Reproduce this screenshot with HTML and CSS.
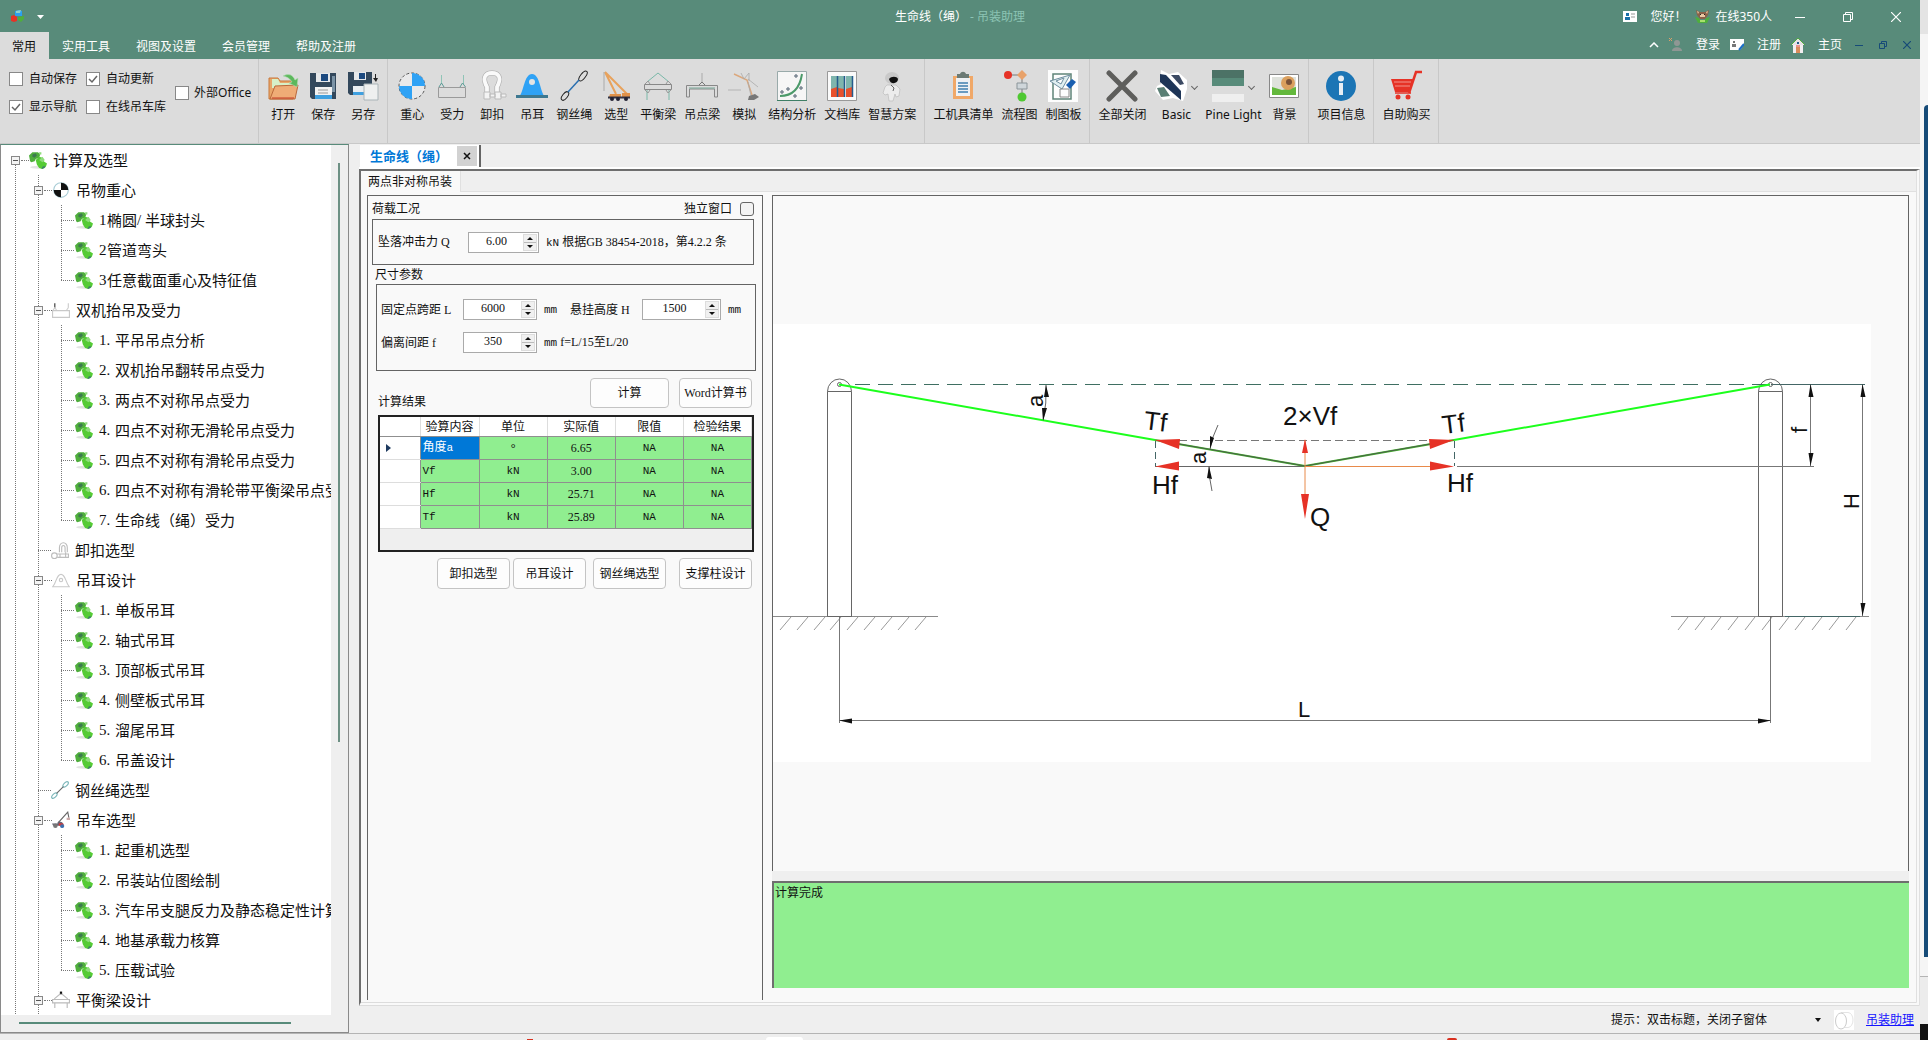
FILE: index.html
```html
<!DOCTYPE html>
<html lang="zh-CN">
<head>
<meta charset="utf-8">
<title>生命线（绳） - 吊装助理</title>
<link rel="stylesheet" href="styles.css">
</head>
<body>
<svg class="defs" aria-hidden="true">
  <symbol id="leaf" viewBox="0 0 16 16">
    <ellipse cx="8" cy="14.500" rx="7" ry="1.300" fill="#e2e4e2"/>
    <path d="M1 9L0 4 3 1h5l2 2-1 3-3 1-1 2-3 1z" fill="#4fae3c"/>
    <path d="M3 3l3-1 1 2-2 2-2-1z" fill="#3d7a50"/>
    <path d="M6 8l3-3 3 1 1 3 3 2-1 3-3 2-3-1-2-3z" fill="#55cb35"/>
    <path d="M9 1h2v2H9zM9 8l3-3 2 3-2 2z" fill="#8fdc7c"/>
    <path d="M12 14l2-1v2l-3 1z" fill="#3c7f6b"/>
  </symbol>
  <symbol id="cog" viewBox="0 0 16 16">
    <circle cx="8" cy="8" r="6.500" fill="#fff" stroke="#a9cdd6"/>
    <path d="M8 8V1.500A6.500 6.500 0 0 1 14.500 8zM8 8v6.500A6.500 6.500 0 0 1 1.500 8z" fill="#111"/>
  </symbol>
  <symbol id="lift" viewBox="0 0 16 16" fill="none">
    <path d="M.5 8.500h15v6H.5z" stroke="#c9c9c9"/><path d="M2.500 2v4" stroke="#333"/><path d="M14.500 2v4M1 8l1.500-2L4 8M13 8l1.500-2" stroke="#ccc"/>
  </symbol>
  <symbol id="shackle" viewBox="0 0 16 16" fill="none" stroke="#bdbdbd">
    <path d="M7.500 10V6a3.500 4.500 0 0 1 7 0v4M9.500 10V6a1.500 2 0 0 1 3 0v4"/><circle cx="3" cy="13" r="2.500"/><path d="M5.500 11.500h10v3h-10M8 11v4M13 10v5"/>
  </symbol>
  <symbol id="lug" viewBox="0 0 16 16" fill="none" stroke="#c9c9c9">
    <path d="M1 13.500C4 10 4 3 8 3s4 7 7 10.500M0 14h16"/><circle cx="8" cy="8" r="1.500"/>
  </symbol>
  <symbol id="rope" viewBox="0 0 16 16" fill="none" stroke="#79b5b8">
    <ellipse cx="13" cy="3" rx="1.500" ry="3" transform="rotate(45 13 3)"/><ellipse cx="3" cy="13" rx="1.500" ry="3" transform="rotate(45 3 13)"/><path d="M5 11l6-6" stroke="#666"/>
  </symbol>
  <symbol id="crane" viewBox="0 0 16 16">
    <path d="M5 11L14 1l1 5" fill="none" stroke="#666"/><path d="M0 11h5l1-2 3 1 2 3H1z" fill="#667"/><path d="M6 11h4v2H6z" fill="#d33"/><circle cx="3" cy="13" r="2" fill="#777"/><circle cx="9" cy="13.500" r="1.700" fill="#3c6fae"/><path d="M13 6h3v2h-3z" fill="#caa"/>
  </symbol>
  <symbol id="beam" viewBox="0 0 16 16" fill="none" stroke="#bbb">
    <path d="M2 7l6-5 6 5M.5 7.500h15v3H.5zM2.500 10v5M13.500 10v5"/><path d="M7 1.500h2" stroke="#111" stroke-width="2"/>
  </symbol>
</svg>

<div class="screen">
<div class="app">
  <header class="titlebar">
    <div class="quick">
      <svg width="16" height="14" viewBox="0 0 16 14"><path d="M5 1l4-1 3 1v5H5z" fill="#2ba0f0"/><path d="M6 1l5-1-1 3H6z" fill="#8fd0c8"/><path d="M1 6l3-1 3 2v4l-3 1-3-1z" fill="#e63226"/><path d="M8 7l6-1v3l-3 3-3-2z" fill="#4fae3c"/></svg>
      <button class="plain" aria-label="自定义快速访问"><svg width="8" height="4" viewBox="0 0 8 4"><path d="M0 0h7L3.500 4z" fill="#fff"/></svg></button>
    </div>
    <h1 class="title">生命线（绳） <span class="title-app">- 吊装助理</span></h1>
    <div class="session">
      <svg class="i-card" width="14" height="11" viewBox="0 0 14 11"><path d="M0 0h14v11H0z" fill="#fff"/><path d="M3 2h3v3H3zM2 6h5v3H2z" fill="#1a6fa8"/><path d="M8 3h4M8 6h4" stroke="#999"/></svg>
      <span class="hello">您好！</span>
      <svg class="i-pet" width="15" height="14" viewBox="0 0 15 14"><path d="M1 0l4 2h5l4-2-1 5-3 4H5L2 5z" fill="#8a6148"/><path d="M2 1l2 1-1 2zM13 1l-2 1 1 2zM5 4h5v3H5z" fill="#e9c9a2"/><path d="M5 4h1v1H5zM9 4h1v1H9z" fill="#222"/><path d="M0 7l4 1 1 2h5l1-2 4-1-3 6H3z" fill="#4fae3c"/><path d="M5 10h5v2H5z" fill="#a8e06d"/></svg>
      <span>在线350人</span>
      <span class="winbtns">
        <button class="plain" aria-label="最小化"><svg width="10" height="10" viewBox="0 0 10 10"><path d="M0 5.500h10" stroke="#fff"/></svg></button>
        <button class="plain" aria-label="还原"><svg width="10" height="10" viewBox="0 0 10 10" fill="none" stroke="#fff"><path d="M.5 2.500h7v7h-7zM2.500 2.500v-2h7v7h-2"/></svg></button>
        <button class="plain" aria-label="关闭"><svg width="10" height="10" viewBox="0 0 10 10"><path d="M0 0l10 10M10 0L0 10" stroke="#fff" stroke-width="1.200"/></svg></button>
      </span>
    </div>
  </header>

  <div class="tabbar">
    <nav class="tabs">
      <button class="tab tab-on">常用</button><button class="tab">实用工具</button><button class="tab">视图及设置</button><button class="tab">会员管理</button><button class="tab">帮助及注册</button>
    </nav>
    <div class="account">
      <button class="plain" aria-label="折叠功能区"><svg width="10" height="6" viewBox="0 0 10 6"><path d="M1 5l4-4 4 4" fill="none" stroke="#fff" stroke-width="1.500"/></svg></button>
      <button class="plain acct"><svg width="14" height="14" viewBox="0 0 14 14"><path d="M0 0l3 3M3 0L0 3" stroke="#d9a06a"/><circle cx="8" cy="5" r="3" fill="#8f9794"/><path d="M3 13c0-5 10-5 10 0z" fill="#8f9794"/></svg>登录</button>
      <button class="plain acct"><svg width="14" height="12" viewBox="0 0 14 12"><path d="M0 0h14v6l-4 5H0z" fill="#fff"/><path d="M3 2h2v2H3zM2 5h4v3H2z" fill="#777"/><path d="M9 11l5-6" stroke="#1a6fc8" stroke-width="2"/></svg>注册</button>
      <button class="plain acct"><svg width="14" height="15" viewBox="0 0 14 15"><path d="M2 7h10v8H2z" fill="#f2eef0"/><path d="M0 7l7-7 7 7" fill="#e8e2e6" stroke="#4fae3c"/><path d="M5 9h4v6H5z" fill="#d98c5a"/><path d="M5 8h4" stroke="#e63226"/><path d="M6 4h2v2H6z" fill="#245b8c"/></svg>主页</button>
      <button class="plain" aria-label="最小化子窗体"><svg width="8" height="8" viewBox="0 0 8 8"><path d="M0 4.500h8" stroke="#164b78"/></svg></button>
      <button class="plain" aria-label="还原子窗体"><svg width="8" height="8" viewBox="0 0 8 8" fill="none" stroke="#164b78"><path d="M.5 2.500h5v5h-5zM2.500 2.500v-2h5v5h-2"/></svg></button>
      <button class="plain" aria-label="关闭子窗体"><svg width="8" height="8" viewBox="0 0 8 8"><path d="M0 0l8 8M8 0L0 8" stroke="#164b78" stroke-width="1.200"/></svg></button>
    </div>
  </div>

  <div class="ribbon">
    <div class="group options">
      <div class="checks">
        <label class="chk"><input type="checkbox">自动保存</label>
        <label class="chk"><input type="checkbox" checked>自动更新</label>
        <label class="chk"><input type="checkbox" checked>显示导航</label>
        <label class="chk"><input type="checkbox">在线吊车库</label>
      </div>
      <label class="chk"><input type="checkbox">外部Office</label>
    </div>
    <div class="group">
      <button class="cmd"><svg viewBox="0 0 32 32"><path d="M2 8h9l2 3h13v18H2z" fill="#e8a66a" stroke="#c9793b"/><path d="M5 9h6l2 4h12v5H5z" fill="#d7f0c8"/><path d="M3 29l5-13 23-1-3 14z" fill="#efac76" stroke="#b9683b"/><path d="M5 28h22" stroke="#c33a26"/><path d="M16 6c6-3 10-1 12 4l3-2-1 9-8-4 3-1c-2-3-4-5-9-6z" fill="#5cb85c" stroke="#b5dcb5" stroke-width=".6"/></svg>打开</button>
      <button class="cmd"><svg viewBox="0 0 32 32"><path d="M3 3h26v26H5l-2-2z" fill="#33485c"/><path d="M9 3h14v9H9z" fill="#e6e8ea"/><path d="M14 4h7v7h-7z" fill="#1c4a80"/><path d="M25 6h3v16h-3z" fill="#7b93a6"/><path d="M8 17h17v12H8z" fill="#f2f2f2"/><path d="M8 25h17v4H8z" fill="#3fa0e0"/><path d="M11 20h10M11 23h10" stroke="#999"/></svg>保存</button>
      <button class="cmd"><svg viewBox="0 0 32 32"><path d="M1 2h24v23H3l-2-2z" fill="#33485c"/><path d="M7 2h12v8H7z" fill="#e6e8ea"/><path d="M12 3h6v6h-6z" fill="#1c4a80"/><path d="M6 16h14v9H6z" fill="#e9eef2"/><path d="M6 22h12v3H6z" fill="#3fa0e0"/><path d="M17 14h14v16H17z" fill="#eef0f0" stroke="#a9b4b8"/><path d="M28 4h1v4h2l-2 4-3-4h2z" fill="#222"/></svg>另存</button>
    </div>
    <div class="group">
      <button class="cmd"><svg viewBox="0 0 32 32"><circle cx="16" cy="16" r="13" fill="#e9e9ea" stroke="#555" stroke-dasharray="3 2"/><path d="M16 16V3a13 13 0 0 1 13 13zM16 16v13A13 13 0 0 1 3 16z" fill="#2fa2f5"/></svg>重心</button>
      <button class="cmd"><svg viewBox="0 0 32 32" fill="none"><path d="M2.500 17.500h27v10h-27z" stroke="#9a9a9a"/><path d="M5.500 5v9M27.500 5v9" stroke="#8fc4b6"/><path d="M3 17l2.500-4L8 17M24 17l2.500-4 3 4" stroke="#5b9a96"/></svg>受力</button>
      <button class="cmd"><svg viewBox="0 0 32 32" fill="none"><path d="M11 24V17C6 8 9 3 16 3s10 5 5 14v7" stroke="#aaa" stroke-width="5"/><path d="M11 24V17C6 8 9 3 16 3s10 5 5 14v7" stroke="#fafafa" stroke-width="3.800"/><path d="M8 22h6v7H8zM19 22h6v7h-6zM25 24h5v3h-5zM14 24h5v3h-5z" fill="#f3f3f3" stroke="#bbb"/></svg>卸扣</button>
      <button class="cmd"><svg viewBox="0 0 32 32"><path d="M3 27C8 22 8 4 16 4s8 18 13 23z" fill="#2fa2f5"/><circle cx="16" cy="12" r="3" fill="#e4e4e4"/><path d="M0 25h32v3H0z" fill="#3d7890"/></svg>吊耳</button>
      <button class="cmd"><svg viewBox="0 0 32 32" fill="none" stroke="#222"><ellipse cx="25" cy="6" rx="2.500" ry="6" transform="rotate(38 25 6)"/><ellipse cx="7" cy="26" rx="2.500" ry="5" transform="rotate(38 7 26)"/><path d="M10 22L21 10" stroke="#2a6fb0" stroke-width="1.500"/></svg>钢丝绳</button>
      <button class="cmd"><svg viewBox="0 0 32 32" fill="none"><path d="M5 2l22 22M5 2l11 22" stroke="#e8a25c" stroke-width="2"/><path d="M4 2v19" stroke="#aaa"/><path d="M10 24h11v3H9zM22 23h8v4h-8z" fill="#e0914a"/><path d="M8 27.500h22" stroke="#334" stroke-width="2"/><circle cx="12" cy="29" r="2" fill="#223"/><circle cx="18" cy="29" r="2" fill="#223"/><circle cx="26" cy="29" r="2" fill="#223"/></svg>选型</button>
      <button class="cmd"><svg viewBox="0 0 32 32" fill="none"><path d="M5 12L16 3l11 9M5 20v10M27 20v10" stroke="#79b8a8"/><path d="M2.500 14.500h27v5h-27z" stroke="#888"/><path d="M3 14l3-3 2 3M24 14l2-3 3 3M3 20l3 3 2-3M24 20l2 3 3-3" stroke="#999"/></svg>平衡梁</button>
      <button class="cmd"><svg viewBox="0 0 32 32" fill="none"><path d="M.5 27V15.500h31V27M3.500 27v-8h25v8M.5 27h3M28.500 27h3" stroke="#888"/><path d="M3 18h26" stroke="#79a898"/><path d="M16 3v9" stroke="#aaa"/><path d="M13 15l3-3 3 3" stroke="#777"/></svg>吊点梁</button>
      <button class="cmd"><svg viewBox="0 0 32 32" fill="none"><path d="M6 4l13 6 5 15" stroke="#dba77c" stroke-width="1.500"/><path d="M13 3l3 6 5-6v8M20 9l10 8M0 20h13M20 12l3 14" stroke="#aaa" stroke-width=".8"/><path d="M21 26l6-2 4 3-5 3h-6z" fill="#777"/></svg>模拟</button>
      <button class="cmd"><svg viewBox="0 0 32 32" fill="none"><path d="M1.500 1.500h29v29h-29z" fill="#f6f6f6" stroke="#9aa"/><path d="M1 30.500h30" stroke="#3f7f66"/><path d="M4 26c14 0 20-9 22-22" stroke="#4c9a6a" stroke-width="2"/><circle cx="6" cy="22" r="1.200" stroke="#456"/><circle cx="12" cy="19" r="1.200" stroke="#456"/><circle cx="20" cy="6" r="1.200" stroke="#456"/><circle cx="25" cy="18" r="1.200" stroke="#456"/><circle cx="19" cy="26" r="1.200" stroke="#456"/></svg>结构分析</button>
      <button class="cmd"><svg viewBox="0 0 32 32"><path d="M1.500 1.500h29v29h-29z" fill="#fafafa" stroke="#999"/><path d="M5 6h6v21H5zM12 6h6v21h-6zM20 6h6v21h-6z" fill="#7fb5ad"/><path d="M5 19l6-2v10H5zM12 18l6 1v8h-6zM20 19l6-2v10h-6z" fill="#e8502c"/><path d="M11.500 6v21M18.500 6v21M26.500 6v21" stroke="#265b8c" stroke-width="1.500"/></svg>文档库</button>
      <button class="cmd"><svg viewBox="0 0 32 32"><ellipse cx="16" cy="8" rx="7" ry="6" fill="#c9c9c9"/><path d="M13 9c2-3 8-3 9 0 0 5-8 6-9 0z" fill="#111"/><path d="M11 15h9l4 4-1 7-3 1-1-3-2 7h-4l-1-7-3 1-2-2 2-6z" fill="#ececec" stroke="#bbb" stroke-width=".7"/><path d="M15 15l3 3-1 3" fill="none" stroke="#666"/></svg>智慧方案</button>
    </div>
    <div class="group">
      <button class="cmd"><svg viewBox="0 0 32 32"><path d="M6 6h20v23H6z" fill="#f0a868"/><path d="M9 8h14v18H9z" fill="#eef1f4"/><path d="M10 4h3c1-3 5-3 6 0h3v4H10z" fill="#6b7a74"/><path d="M11 13h10M11 16h10M11 19h10M11 22h10" stroke="#3f7fae" stroke-width="1.300"/></svg>工机具清单</button>
      <button class="cmd"><svg viewBox="0 0 32 32"><path d="M6 5h13v20" fill="none" stroke="#999" stroke-width="1.500"/><circle cx="5" cy="5" r="4" fill="#e63226"/><path d="M19 0l5 5-5 5-5-5z" fill="#e8a26a"/><path d="M14 13h10v6H14z" fill="#cfd6da" stroke="#8a9499"/><circle cx="19" cy="27" r="4.500" fill="#4fc832"/></svg>流程图</button>
      <button class="cmd"><svg viewBox="0 0 32 32"><path d="M1 0h30v32H1z" fill="#fdfdfd"/><path d="M6 4h18v25H6z" fill="none" stroke="#5f8478" stroke-width="1.500"/><path d="M3 11l20-6-8 14z" fill="#e1eff1" stroke="#6f8fa0"/><path d="M9 11l8-3-3 6z" fill="#fff" stroke="#6f8fa0"/><path d="M19 15l6-6 4 3-6 7z" fill="#1a5fb0"/><path d="M13 19h9v8h-9z" fill="none" stroke="#888"/></svg>制图板</button>
    </div>
    <div class="group">
      <button class="cmd"><svg viewBox="0 0 32 32"><path d="M3 3l26 26M29 3L3 29" stroke="#5e5e5c" stroke-width="5" stroke-linecap="round"/></svg>全部关闭</button>
      <button class="cmd cmd-basic"><span class="drop"><svg viewBox="0 0 32 32"><path d="M6 0l8 4 9-2 9 8v9l-4 12-10-3-10 2-8-9 2-5 4-2z" fill="#fff"/><path d="M5 4l6 1 15 16v9L5 12z" fill="#1e3557"/><path d="M16 5h8l5 9-4 1z" fill="#3c4a63"/><path d="M2 18l7-1 6 9-9 1z" fill="#5a7f74"/></svg><i class="arrow"></i></span>Basic</button>
      <button class="cmd cmd-theme"><span class="drop"><svg viewBox="0 0 32 32"><path d="M0 0h32v8H0z" fill="#4c7266"/><path d="M0 8h32v8H0z" fill="#588b7a"/><path d="M0 24h32v8H0z" fill="#efefef"/></svg><i class="arrow"></i></span>Pine Light</button>
      <button class="cmd"><svg viewBox="0 0 32 32"><path d="M1.500 4.500h29v23h-29z" fill="#fff" stroke="#888"/><path d="M4 7h24v18H4z" fill="#dfe2dc"/><path d="M4 17l10 3 14-3v8H4z" fill="#63b83c"/><circle cx="20" cy="13" r="7" fill="#dba05e"/><circle cx="21" cy="12" r="3" fill="#7a5238"/></svg>背景</button>
    </div>
    <div class="group">
      <button class="cmd"><svg viewBox="0 0 32 32"><circle cx="16" cy="16" r="15" fill="#1b75b5"/><circle cx="16" cy="8.500" r="3" fill="#e6eef4"/><path d="M14 13h4v12h-4z" fill="#e6eef4"/></svg>项目信息</button>
    </div>
    <div class="group">
      <button class="cmd"><svg viewBox="0 0 32 32"><path d="M1 9h22l-3 13H5z" fill="#e63226"/><path d="M19 23L26 2h6" fill="none" stroke="#e63226" stroke-width="2.500"/><path d="M4 12h17M5 16h15" stroke="#f2948c"/><path d="M5 23h16" stroke="#e63226" stroke-width="1.500"/><circle cx="8" cy="27" r="2.500" fill="#e63226"/><circle cx="18" cy="27" r="2.500" fill="#e63226"/></svg>自助购买</button>
    </div>
  </div>

  <div class="work">
    <aside class="side">
      <div class="treebox">
        <ul class="tree l1">
          <li><div class="row"><button class="exp" aria-label="折叠"></button><i class="stem"></i><svg class="ico"><use href="#leaf"/></svg>计算及选型</div>
          <ul class="l2">
            <li><div class="row"><button class="exp" aria-label="折叠"></button><i class="stem"></i><svg class="ico"><use href="#cog"/></svg>吊物重心</div>
              <ul class="l3">
                <li class="row"><i class="stem"></i><svg class="ico"><use href="#leaf"/></svg><b>1</b>椭圆<b>/</b>半球封头</li>
                <li class="row"><i class="stem"></i><svg class="ico"><use href="#leaf"/></svg><b>2</b>管道弯头</li>
                <li class="row"><i class="stem"></i><svg class="ico"><use href="#leaf"/></svg><b>3</b>任意截面重心及特征值</li>
              </ul></li>
            <li><div class="row"><button class="exp" aria-label="折叠"></button><i class="stem"></i><svg class="ico"><use href="#lift"/></svg>双机抬吊及受力</div>
              <ul class="l3 num">
                <li class="row"><i class="stem"></i><svg class="ico"><use href="#leaf"/></svg><b>1.</b>平吊吊点分析</li>
                <li class="row"><i class="stem"></i><svg class="ico"><use href="#leaf"/></svg><b>2.</b>双机抬吊翻转吊点受力</li>
                <li class="row"><i class="stem"></i><svg class="ico"><use href="#leaf"/></svg><b>3.</b>两点不对称吊点受力</li>
                <li class="row"><i class="stem"></i><svg class="ico"><use href="#leaf"/></svg><b>4.</b>四点不对称无滑轮吊点受力</li>
                <li class="row"><i class="stem"></i><svg class="ico"><use href="#leaf"/></svg><b>5.</b>四点不对称有滑轮吊点受力</li>
                <li class="row"><i class="stem"></i><svg class="ico"><use href="#leaf"/></svg><b>6.</b>四点不对称有滑轮带平衡梁吊点受力</li>
                <li class="row"><i class="stem"></i><svg class="ico"><use href="#leaf"/></svg><b>7.</b>生命线（绳）受力</li>
              </ul></li>
            <li><div class="row leafrow"><i class="stem"></i><svg class="ico"><use href="#shackle"/></svg>卸扣选型</div></li>
            <li><div class="row"><button class="exp" aria-label="折叠"></button><i class="stem"></i><svg class="ico"><use href="#lug"/></svg>吊耳设计</div>
              <ul class="l3 num">
                <li class="row"><i class="stem"></i><svg class="ico"><use href="#leaf"/></svg><b>1.</b>单板吊耳</li>
                <li class="row"><i class="stem"></i><svg class="ico"><use href="#leaf"/></svg><b>2.</b>轴式吊耳</li>
                <li class="row"><i class="stem"></i><svg class="ico"><use href="#leaf"/></svg><b>3.</b>顶部板式吊耳</li>
                <li class="row"><i class="stem"></i><svg class="ico"><use href="#leaf"/></svg><b>4.</b>侧壁板式吊耳</li>
                <li class="row"><i class="stem"></i><svg class="ico"><use href="#leaf"/></svg><b>5.</b>溜尾吊耳</li>
                <li class="row"><i class="stem"></i><svg class="ico"><use href="#leaf"/></svg><b>6.</b>吊盖设计</li>
              </ul></li>
            <li><div class="row leafrow"><i class="stem"></i><svg class="ico"><use href="#rope"/></svg>钢丝绳选型</div></li>
            <li><div class="row"><button class="exp" aria-label="折叠"></button><i class="stem"></i><svg class="ico"><use href="#crane"/></svg>吊车选型</div>
              <ul class="l3 num">
                <li class="row"><i class="stem"></i><svg class="ico"><use href="#leaf"/></svg><b>1.</b>起重机选型</li>
                <li class="row"><i class="stem"></i><svg class="ico"><use href="#leaf"/></svg><b>2.</b>吊装站位图绘制</li>
                <li class="row"><i class="stem"></i><svg class="ico"><use href="#leaf"/></svg><b>3.</b>汽车吊支腿反力及静态稳定性计算</li>
                <li class="row"><i class="stem"></i><svg class="ico"><use href="#leaf"/></svg><b>4.</b>地基承载力核算</li>
                <li class="row"><i class="stem"></i><svg class="ico"><use href="#leaf"/></svg><b>5.</b>压载试验</li>
              </ul></li>
            <li><div class="row"><button class="exp" aria-label="折叠"></button><i class="stem"></i><svg class="ico"><use href="#beam"/></svg>平衡梁设计</div></li>
          </ul></li>
        </ul>
      </div>
      <div class="vscroll"><i class="vthumb"></i></div>
      <div class="hscroll"><i class="hthumb"></i></div>
    </aside>

    <div class="mdi">
      <div class="doctabs">
        <div class="doctab"><span>生命线（绳）</span><button class="docclose" aria-label="关闭标签"><svg width="8" height="8" viewBox="0 0 8 8"><path d="M1 1l6 6M7 1L1 7" stroke="#111" stroke-width="1.500"/></svg></button></div>
      </div>
      <main class="frame">
        <div class="subtabs"><button class="subtab">两点非对称吊装</button></div>
        <div class="content">
          <form class="form">
            <div class="formhead"><span>荷载工况</span><label class="solo">独立窗口<input type="checkbox"></label></div>
            <div class="box load">
              <label class="w-load" for="q">坠落冲击力 Q</label>
              <div class="spin spin-q"><input id="q" type="text" value="6.00"><span class="ud"><button type="button" aria-label="增"></button><button type="button" aria-label="减" class="dn"></button></span></div>
              <span class="note"><span class="u">kN</span> 根据GB 38454-2018，第4.2.2 条</span>
            </div>
            <div class="caption">尺寸参数</div>
            <div class="box dims">
              <label for="l">固定点跨距 L</label>
              <div class="spin"><input id="l" type="text" value="6000"><span class="ud"><button type="button" aria-label="增"></button><button type="button" aria-label="减" class="dn"></button></span></div>
              <span class="note"><span class="u">mm</span></span>
              <label for="h">悬挂高度 H</label>
              <div class="spin"><input id="h" type="text" value="1500"><span class="ud"><button type="button" aria-label="增"></button><button type="button" aria-label="减" class="dn"></button></span></div>
              <span class="note"><span class="u">mm</span></span>
              <label for="f">偏离间距 f</label>
              <div class="spin"><input id="f" type="text" value="350"><span class="ud"><button type="button" aria-label="增"></button><button type="button" aria-label="减" class="dn"></button></span></div>
              <span class="note rest"><span class="u">mm</span> f=L/15至L/20</span>
            </div>
            <div class="acts">
              <span class="reslabel">计算结果</span>
              <button type="button" class="btn wide">计算</button>
              <button type="button" class="btn">Word计算书</button>
            </div>
            <div class="gridbox">
              <table>
                <colgroup><col class="c0"><col class="c1"><col><col><col><col></colgroup>
                <thead><tr><th></th><th>验算内容</th><th>单位</th><th>实际值</th><th>限值</th><th>检验结果</th></tr></thead>
                <tbody>
                  <tr><th><i class="cur"></i></th><td class="sel">角度<span class="u">a</span></td><td>°</td><td>6.65</td><td><span class="u">NA</span></td><td><span class="u">NA</span></td></tr>
                  <tr><th></th><td><span class="u">Vf</span></td><td><span class="u">kN</span></td><td>3.00</td><td><span class="u">NA</span></td><td><span class="u">NA</span></td></tr>
                  <tr><th></th><td><span class="u">Hf</span></td><td><span class="u">kN</span></td><td>25.71</td><td><span class="u">NA</span></td><td><span class="u">NA</span></td></tr>
                  <tr><th></th><td><span class="u">Tf</span></td><td><span class="u">kN</span></td><td>25.89</td><td><span class="u">NA</span></td><td><span class="u">NA</span></td></tr>
                </tbody>
              </table>
            </div>
            <div class="links">
              <button type="button" class="btn">卸扣选型</button>
              <button type="button" class="btn">吊耳设计</button>
              <button type="button" class="btn">钢丝绳选型</button>
              <button type="button" class="btn">支撑柱设计</button>
            </div>
          </form>

          <div class="view">
            <div class="canvas">
              <svg class="drawing" viewBox="0 0 1098 438" role="img" aria-label="生命线受力简图">
                <path d="M0 0h1098v438H0z" fill="#fff"/>
                <g fill="none" stroke="#8a8a8a">
                  <path d="M0 292.500h165M898 292.500h198"/>
                  <path d="M18 293l-11 13M35 293l-11 13M52 293l-11 13M68 293l-11 13M85 293l-11 13M102 293l-11 13M119 293l-11 13M136 293l-11 13M153 293l-11 13M915 293l-10 13M932 293l-10 13M948 293l-10 13M965 293l-10 13M982 293l-10 13M999 293l-10 13M1016 293l-10 13M1032 293l-10 13M1049 293l-10 13M1066 293l-10 13M1083 293l-10 13" stroke="#999"/>
                </g>
                <g fill="none" stroke="#666">
                  <path d="M54.500 67.500h24V292.500h-24zM54.500 67.500a12 12.500 0 0 1 24 0"/>
                  <path d="M985.500 67.500h24V292.500h-24zM985.500 67.500a12 12.500 0 0 1 24 0"/>
                  <path d="M66.500 293v106M997.500 293v106M66 396.500h932" stroke="#777"/>
                  <path d="M684 142.500h357M1037.500 61v81M1089.500 61v231" stroke="#777"/>
                  <path d="M998 60.500h94M1012 292.500h75" stroke="#466"/>
                  <path d="M382 116.500h299" stroke="#777" stroke-dasharray="8 4"/>
                  <path d="M382.500 117v25M681.500 117v25" stroke="#466" stroke-dasharray="7 4"/>
                  <path d="M382 142.500h150"/>
                  <path d="M273 61q1 18-3 36M445 101q-6 12-8 24M436 142q0 12 3 25"/>
                  <circle cx="66.500" cy="60.500" r="2"/><circle cx="997.500" cy="60.500" r="2"/>
                </g>
                <path d="M82 60.500h915" stroke="#3f6f62" stroke-dasharray="15 8"/>
                <path d="M66 60.500L382 116M681 116L997 60.500" stroke="#1cff1c" stroke-width="2"/>
                <path d="M382 116l150 26 149-26" fill="none" stroke="#45b52c" stroke-width="2"/>
                <path d="M406 120l126 22 125-22" fill="none" stroke="#4a5f4a"/>
                <path d="M532 142.500h126M532 116v60" stroke="#e88a4a"/>
                <path d="M382 116l25-1-1 10zM382 142.500l24-5v9zM681 116l-25-1 1 10zM681 142.500l-24-5v9zM532 115l-3 14h6zM532 195l-4-25h8z" fill="#e63226"/>
                <path d="M273 61l-2 12h5zM270 97l-1-13h5zM437 125l0-13 4 2zM436 142l-2 12 5 1zM66 396.500l13-2v5zM998 396.500l-13-2v5zM1037.500 60l-2 13h5zM1037.500 142l-2-13h5zM1089.500 60l-2 13h5zM1089.500 292l-2-13h5z" fill="#111"/>
                <g class="big">
                  <text x="370" y="105" transform="rotate(7 370 105)">Tf</text><text x="670" y="110" transform="rotate(-7 670 110)">Tf</text>
                  <text x="379" y="170">Hf</text><text x="674" y="168">Hf</text><text x="510" y="101">2×Vf</text><text x="537" y="202">Q</text>
                </g>
                <g class="mid">
                  <text x="525" y="393">L</text>
                  <text transform="translate(270 83) rotate(-90)">a</text><text transform="translate(433 140) rotate(-90)">a</text>
                  <text transform="translate(1034 109) rotate(-90)">f</text><text transform="translate(1086 185) rotate(-90)">H</text>
                </g>
              </svg>
            </div>
            <output class="message">计算完成</output>
          </div>
        </div>
      </main>
      <footer class="status">
        <span>提示：双击标题，关闭子窗体</span>
        <button class="plain more" aria-label="更多提示"><svg width="6" height="4" viewBox="0 0 6 4"><path d="M0 0h6L3 4z" fill="#111"/></svg></button>
        <svg class="toggle" width="20" height="20" viewBox="0 0 20 20"><path d="M0 0h20v20H0z" fill="#fff"/><path d="M7 2.500h7a5 7.500 0 0 1 0 15H7" fill="none" stroke="#e4e4e4"/><ellipse cx="7" cy="11" rx="5.500" ry="8" fill="#fff" stroke="#ccc"/></svg>
        <a href="#">吊装助理</a>
      </footer>
    </div>
  </div>
</div>
<div class="edge"><i class="edge-top"></i><i class="edge-bar"></i><i class="edge-mid"></i><i class="edge-end"></i></div>
<div class="dock"><i class="dot"></i><i class="pill"></i><i class="dot big-dot"></i></div>
</div>
</body>
</html>
```
FILE: styles.css
```css
* { box-sizing: border-box; }

body {
  margin: 0;
  font: 12px/16px "Noto Sans", "Noto Sans CJK SC", sans-serif;
  color: #111;
  background: #efefef;
}

ul { list-style: none; margin: 0; padding: 0; }
svg, i { display: block; flex: none; }
.defs { position: absolute; width: 0; height: 0; }
button, input { font: inherit; color: inherit; }
button { padding: 0; margin: 0; border: 0; background: none; }
.plain { display: flex; align-items: center; white-space: nowrap; }

.screen {
  display: grid;
  grid-template: minmax(0, 1fr) 7px / minmax(0, 1fr) 8px;
  height: 100vh;
}
.app { display: flex; flex-direction: column; min-height: 0; }

/* Title bar */
.titlebar {
  display: grid;
  grid-template-columns: 1fr auto 1fr;
  align-items: center;
  height: 32px;
  padding-top: 1px;
  background: #588b7a;
  color: #fff;
}
.quick { display: flex; align-items: center; gap: 11px; padding-left: 10px; }
.title { margin: 0; font-size: 12px; font-weight: 400; }
.title-app { color: #8cc4b4; }
.session { display: flex; align-items: center; justify-content: flex-end; padding-right: 19px; }
.i-card { margin-right: 13px; }
.hello { margin-right: 9px; }
.i-pet { margin-right: 5px; }
.winbtns { display: flex; gap: 38px; margin-left: 23px; }

/* Ribbon tabs */
.tabbar {
  display: flex;
  justify-content: space-between;
  height: 27px;
  background: #588b7a;
  color: #fff;
}
.tabs { display: flex; }
.tab { padding: 2px 13px 0 12px; }
.tab + .tab { padding-left: 13px; }
.tab-on { background: #dcdcdc; color: #111; }
.account { display: flex; align-items: center; gap: 10px; padding: 0 9px 1px 0; }
.account > .plain:nth-last-child(-n+2) { margin-left: 6px; }
.account > .plain:nth-last-child(3) { margin-left: 3px; }
.acct { gap: 13px; }

/* Ribbon */
.ribbon {
  display: flex;
  height: 85px;
  background: #dcdcdc;
  border-bottom: 1px solid #c8c8c8;
}
.group { display: flex; padding: 10px 4px 0; border-right: 1px solid #c8c8c8; }
.options { padding: 0 7px 16px 9px; align-items: center; gap: 9px; }
.checks { display: grid; grid-template-columns: 77px auto; row-gap: 12px; }
.chk { display: flex; align-items: center; gap: 6px; white-space: nowrap; }
.options > .chk { gap: 5px; }
.chk input, .solo input {
  appearance: none;
  flex: none;
  width: 14px;
  height: 14px;
  margin: 0;
  border: 1px solid #888;
  background: #fff;
}
.chk input:checked {
  background: #fff url("data:image/svg+xml,%3Csvg xmlns='http://www.w3.org/2000/svg' viewBox='0 0 12 12'%3E%3Cpath d='M2 6l3 3 5-6' fill='none' stroke='%23666' stroke-width='1.5'/%3E%3C/svg%3E");
}
.cmd {
  display: flex;
  flex-direction: column;
  align-items: center;
  gap: 5px;
  min-width: 40px;
  height: 60px;
  padding: 1px 4px 0;
  white-space: nowrap;
}
.cmd svg { width: 32px; height: 32px; }
.cmd-basic { min-width: 52px; }
.cmd-theme { width: 62px; }
.drop { display: flex; align-items: center; gap: 5px; }
.arrow {
  width: 5px;
  height: 5px;
  border: solid #666;
  border-width: 0 1px 1px 0;
  transform: rotate(45deg);
}

/* Work area */
.work { display: flex; flex: 1; min-height: 0; }
.side {
  display: grid;
  grid-template: minmax(0, 1fr) 17px / minmax(0, 1fr) 17px;
  flex: 0 0 349px;
  border: 1px solid #8a8a8a;
  border-top-color: #588b7a;
  background: #efefef;
}
.treebox { overflow: hidden; background: #fff; }
.tree { font-size: 15px; }
.row { display: flex; align-items: center; height: 30px; white-space: nowrap; }
.row b { min-width: 8px; font-family: "Liberation Serif", serif; font-weight: 400; }
.num b { min-width: 16px; }
.l1 > li > .row { padding-left: 10px; }
.l2 > li > .row { padding-left: 33px; }
.l2 > li > .leafrow { padding-left: 37px; }
.l3 > .row { padding-left: 60px; }
.ico { width: 18px; height: 18px; margin: 0 6px 0 0; }
.stem { width: 8px; margin-left: 1px; border-top: 1px dotted #777; }
.leafrow .stem { width: 13px; margin-left: 0; }
.l3 .stem { width: 13px; margin-left: 0; }
.l3 .ico { margin-left: 1px; }
.exp {
  width: 9px;
  height: 9px;
  border: 1px solid #888;
  background: linear-gradient(#555, #555) center / 5px 1px no-repeat #f4f4f4;
}
.l1, .l2, .l3 { background: repeating-linear-gradient(#777 0 1px, transparent 1px 2px) no-repeat; }
.l1 { background-size: 1px 100%; background-position: 14px 20px; }
.l2 { background-size: 1px 100%; background-position: 37px 0; }
.l3 { background-size: 1px calc(100% - 15px); background-position: 60px 0; }
.vscroll { padding: 18px 0 0 7px; }
.vthumb { width: 2px; height: 68%; background: #6d9084; }
.hscroll { padding: 7px 0 0 18px; }
.hthumb { width: 272px; height: 2px; background: #588b7a; }

/* Documents */
.mdi { display: flex; flex-direction: column; flex: 1; min-width: 0; padding-left: 10px; }
.doctabs { display: flex; height: 25px; padding: 1px 0 0 1px; border-bottom: 2px solid #fff; }
.doctab {
  display: flex;
  align-items: center;
  justify-content: space-between;
  width: 121px;
  padding: 0 2px 0 10px;
  border-right: 2px solid #646464;
  background: #fff;
  color: #0078d7;
  font-size: 13px;
  font-weight: 700;
}
.docclose { display: grid; place-items: center; width: 20px; height: 20px; background: #d2d2d2; }
.frame {
  display: flex;
  flex-direction: column;
  flex: 1;
  min-height: 0;
  padding-right: 5px;
  border: 2px solid #6e6e6e;
  border-right: 4px double #e0e0e0;
  border-bottom: 4px double #dcdcdc;
  background: #f9f9f9;
}
.subtabs { display: flex; height: 21px; margin-right: -5px; background: #efefef; border-bottom: 1px solid #e0e0e0; }
.subtab { height: 21px; padding: 0 8px 0 7px; border-right: 1px solid #e0e0e0; background: #f9f9f9; }
.content { display: flex; gap: 9px; flex: 1; min-height: 0; padding: 3px 2px 2px 6px; }

/* Parameters */
.form {
  flex: 0 0 396px;
  border: 1px solid #646464;
  border-bottom: 0;
  font-family: "Liberation Serif", "Noto Sans CJK SC", serif;
}
.formhead, .solo { display: flex; align-items: center; }
.formhead { justify-content: space-between; height: 23px; padding: 3px 8px 0 4px; }
.solo { gap: 8px; }
.solo input { border-radius: 3px; border-color: #666; background: #f3f3f3; }
.box { border: 1px solid #646464; align-items: center; }
.load { display: flex; height: 46px; margin: 0 8px 0 4px; padding: 0 5px; }
.w-load { width: 90px; }
.caption { height: 19px; line-height: 20px; padding-left: 7px; }
.dims {
  display: grid;
  grid-template-columns: 82px 74px 33px 72px 79px 1fr;
  align-content: start;
  row-gap: 12px;
  height: 87px;
  margin: 0 6px 0 8px;
  padding: 14px 4px 0;
  white-space: nowrap;
}
.note { padding-left: 7px; white-space: nowrap; }
.rest { grid-column: 3 / -1; }
.u { font-family: "Liberation Mono", monospace; font-size: 11px; }
.spin { display: flex; height: 21px; padding: 1px; border: 1px solid #aaa; background: #fff; }
.spin-q { width: 71px; }
.spin input {
  flex: 1;
  width: 0;
  padding: 0 0 3px;
  border: 0;
  background: none;
  text-align: center;
  font-family: "Liberation Serif", serif;
}
.ud { display: grid; grid-template-rows: 1fr 1fr; gap: 1px; width: 14px; background: #bbb; border: 1px solid #ddd; }
.ud button {
  background: #f0f0f0;
  display: grid;
  place-items: center;
}
.ud button::after { content: ""; border: 3px solid transparent; border-top: 0; border-bottom-color: #111; }
.ud .dn::after { border-bottom: 0; border-top: 3px solid #111; }
.acts { display: flex; align-items: flex-end; gap: 10px; padding: 7px 10px 0; }
.reslabel { margin-right: auto; line-height: 12px; }
.btn {
  width: 73px;
  height: 30px;
  border: 1px solid #c4c4c4;
  border-radius: 4px;
  background: #fdfdfd;
  white-space: nowrap;
}
.wide { width: 79px; }
.gridbox { height: 137px; margin: 7px 8px 6px 10px; border: 2px solid #222; background: #efefef; }
table { width: 100%; table-layout: fixed; border-collapse: collapse; }
.c0 { width: 40px; }
.c1 { width: 59px; }
th, td { height: 23px; padding: 0; text-align: center; font-weight: 400; }
thead th { height: 19px; padding-top: 2px; background: #fff; border-right: 1px solid #ddd; border-bottom: 1px solid #8f8f8f; }
tbody th { background: #fff; border-bottom: 1px solid #ddd; }
tbody td { background: #90ee90; border: 1px solid #8f8f8f; }
tbody td:nth-child(2) { text-align: left; padding-left: 2px; }
tbody td.sel { background: #0078d7; color: #fff; }
.cur { width: 0; margin-left: 6px; border: 4px solid transparent; border-left: 5px solid #1e3a5f; border-right: 0; }
.links { display: grid; grid-template-columns: 76px 80px 86px 73px; justify-content: end; padding-right: 10px; }
.links .btn { height: 31px; }

/* Drawing and message */
.view { display: flex; flex-direction: column; flex: 1; min-width: 0; padding-bottom: 12px; }
.canvas {
  flex: 1;
  min-height: 0;
  overflow: hidden;
  padding: 128px 37px 0 0;
  border: 1px solid #646464;
  border-bottom: 0;
}
.drawing { width: 100%; height: auto; }
.drawing text { font-family: "Liberation Sans", sans-serif; fill: #111; }
.big { font-size: 26px; }
.mid { font-size: 22px; }
.message {
  display: block;
  height: 117px;
  padding: 4px 0 0 3px;
  border-top: 10px solid #efefef;
  background: #90ee90;
  box-shadow: inset 2px 2px #6e6e6e;
}

/* Status bar */
.status { display: flex; align-items: center; justify-content: flex-end; height: 27px; padding-right: 6px; }
.more { padding: 6px 13px 6px 48px; }
.toggle { margin-right: 12px; }
.status a { color: #1414ff; }

/* Desktop around the window */
.edge { grid-row: 1 / 3; grid-column: 2; display: flex; flex-direction: column; background: #f5f5f5; }
.edge-top { height: 34px; background: #e4e4e4; }
.edge-bar { flex: 1; margin: 71px 0 0 4px; border-radius: 4px 0 0; background: #164b78; }
.edge-mid { height: 67px; background: linear-gradient(#f5f5f5 19px, #b4b4b4 19px 20px, #ececec 20px); }
.edge-end { height: 16px; background: #111; }
.dock { display: flex; align-items: flex-end; border-top: 1px solid #b4b4b4; background: #eee; overflow: hidden; }
.dot { width: 6px; height: 1px; margin-left: 527px; background: #d9301f; }
.pill { width: 37px; height: 3px; margin-left: 233px; border-radius: 3px 3px 0 0; background: #fff; }
.big-dot { width: 10px; height: 2px; margin-left: 644px; border-radius: 5px 5px 0 0; }
```
